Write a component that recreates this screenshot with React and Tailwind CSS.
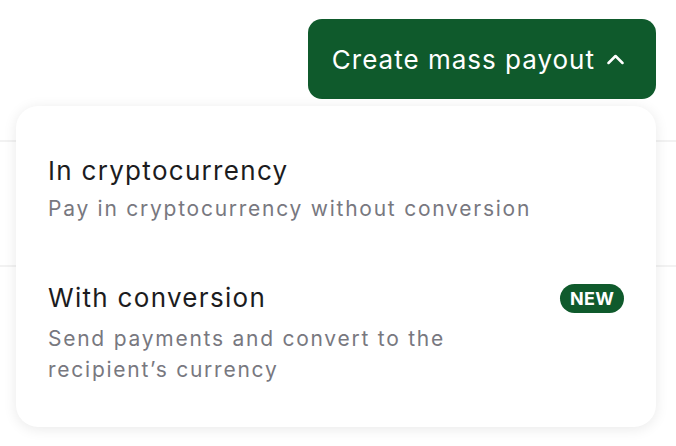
import React from 'react';

function ChevronUp() {
  return (
    <svg width="17" height="11" viewBox="0 0 17 11" fill="none" stroke="currentColor" strokeWidth="2.5" strokeLinecap="round" strokeLinejoin="round">
      <path d="M1.5 9L8.5 2l7 7" />
    </svg>
  );
}

export default function App() {
  return (
    <div className="relative h-[446px] w-[676px] overflow-hidden bg-white" style={{ fontFamily: 'Inter, "Noto Sans", sans-serif' }}>
      <div className="absolute left-0 right-0 top-[140px] h-[2px] bg-[#f2f2f2]" />
      <div className="absolute left-0 right-0 top-[265px] h-[2px] bg-[#f2f2f2]" />
      <div className="relative flex flex-col items-end px-5 pt-[19px]">
        <button className="flex h-[80px] items-center gap-[12px] rounded-[14px] bg-[#0f5a2c] pl-6 pr-[32px] text-[26px] tracking-[1px] text-white">
          Create mass payout
          <ChevronUp />
        </button>
      </div>
      <div className="absolute left-4 top-[106px] w-[640px] rounded-[22px] bg-white px-8 pt-[47px] pb-[42px] shadow-[0_2px_14px_rgba(0,0,0,0.09)]">
        <div>
          <p className="text-[26px] leading-[36px] tracking-[1.3px] text-[#1c1c1e]">In cryptocurrency</p>
          <p className="mt-[4px] text-[21px] leading-[31px] tracking-[1.75px] text-[#78787f]">Pay in cryptocurrency without conversion</p>
        </div>
        <div className="mt-[56px] flex items-start justify-between">
          <div>
            <p className="text-[26px] leading-[36px] tracking-[1.3px] text-[#1c1c1e]">With conversion</p>
            <p className="mt-[7px] max-w-[440px] text-[21px] leading-[31px] tracking-[1.75px] text-[#78787f]">Send payments and convert to the recipient’s currency</p>
          </div>
          <span className="mt-[4px] flex h-[29px] w-[64px] items-center justify-center rounded-full bg-[#0f5a2c] text-[18px] font-bold tracking-[0.3px] text-white">NEW</span>
        </div>
      </div>
    </div>
  );
}
